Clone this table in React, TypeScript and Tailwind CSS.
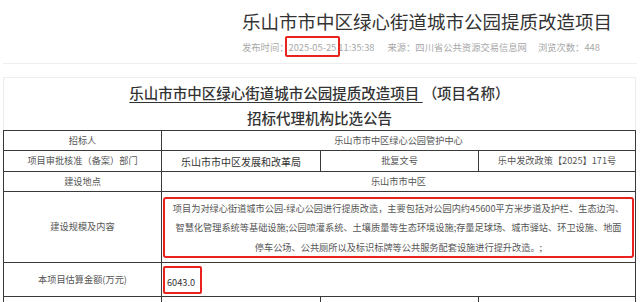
import React from 'react'

const cjk = { fontFamily: '"Noto Sans CJK SC", "Noto Sans", sans-serif' }

const cell = 'border border-[#3a3a3a] p-0 align-middle text-center'

const App = () => {
  return (
    <div className="w-[640px] h-[302px] overflow-hidden bg-white" style={cjk}>
      {/* header */}
      <div className="pl-[242px] pt-[9px]">
        <h1 className="text-[18.5px] leading-[24px] text-[#333] font-normal whitespace-nowrap">
          乐山市市中区绿心街道城市公园提质改造项目
        </h1>
        <div className="mt-[7px] text-[9.3px] leading-[14px] text-[#a8a8a8] whitespace-nowrap">
          <span>发布时间：</span>
          <span className="relative">
            2025-05-25
            <span className="absolute -left-[4px] -right-[4px] -top-[4px] -bottom-[3px] border-2 border-[#e8231d] rounded-[2px]" />
          </span>
          <span> 11:35:38</span>
          <span className="ml-[13px]">来源：四川省公共资源交易信息网</span>
          <span className="ml-[11px]">浏览次数：448</span>
        </div>
      </div>

      <div className="mt-[9px] ml-[3px] w-[634px] border-t border-[#eeeeee]" />

      {/* notice body */}
      <div className="mt-[13px] ml-[3px] w-[633px] border border-[#ececec] border-b-0">
        <div className="pt-[5px] text-center text-[14.5px] leading-[20px] text-[#333] font-medium whitespace-nowrap">
          <span className="underline underline-offset-[3px]">乐山市市中区绿心街道城市公园提质改造项目 </span>
          <span>（项目名称）</span>
        </div>
        <div className="mt-[5px] text-center text-[14.5px] leading-[20px] text-[#333] font-medium">
          招标代理机构比选公告
        </div>

        <table className="mt-[2px] -ml-px w-[632px] table-fixed border-collapse text-[9.2px] text-[#555]">
          <colgroup>
            <col className="w-[158px]" />
            <col className="w-[159px]" />
            <col className="w-[158px]" />
            <col className="w-[157px]" />
          </colgroup>
          <tbody>
            <tr className="h-[20px]">
              <td className={cell}>招标人</td>
              <td className={cell} colSpan={3}>乐山市市中区绿心公园管护中心</td>
            </tr>
            <tr className="h-[21px]">
              <td className={cell}>项目审批核准（备案）部门</td>
              <td className={`${cell} text-[10px] text-[#333]`}>乐山市市中区发展和改革局</td>
              <td className={cell}>批复文号</td>
              <td className={cell}>乐中发改政策【2025】171号</td>
            </tr>
            <tr className="h-[20px]">
              <td className={cell}>建设地点</td>
              <td className={cell} colSpan={3}>乐山市市中区</td>
            </tr>
            <tr className="h-[71px]">
              <td className={cell}>建设规模及内容</td>
              <td className={cell} colSpan={3}>
                <div className="mx-[1px] my-[4px] h-[61px] border-2 border-[#e8231d] rounded-[3px] leading-[19.5px] whitespace-nowrap">
                  <div>项目为对绿心街道城市公园-绿心公园进行提质改造，主要包括对公园内约45600平方米步道及护栏、生态边沟、</div>
                  <div>智慧化管理系统等基础设施;公园喷灌系统、土壤质量等生态环境设施;存量足球场、城市驿站、环卫设施、地面</div>
                  <div>停车公场、公共厕所以及标识标牌等公共服务配套设施进行提升改造。;</div>
                </div>
              </td>
            </tr>
            <tr className="h-[34px]">
              <td className={cell}>本项目估算金额(万元)</td>
              <td className={`${cell} text-left`} colSpan={3}>
                <div className="ml-[1px] w-[39px] h-[28px] border-2 border-[#e8231d] rounded-[2px] pl-[2px] pt-[8px] leading-[12px] text-[#333]">
                  6043.0
                </div>
              </td>
            </tr>
            <tr className="h-[20px]">
              <td className={cell}></td>
              <td className={cell}></td>
              <td className={cell}></td>
              <td className={cell}></td>
            </tr>
          </tbody>
        </table>
      </div>
    </div>
  )
}

export default App
